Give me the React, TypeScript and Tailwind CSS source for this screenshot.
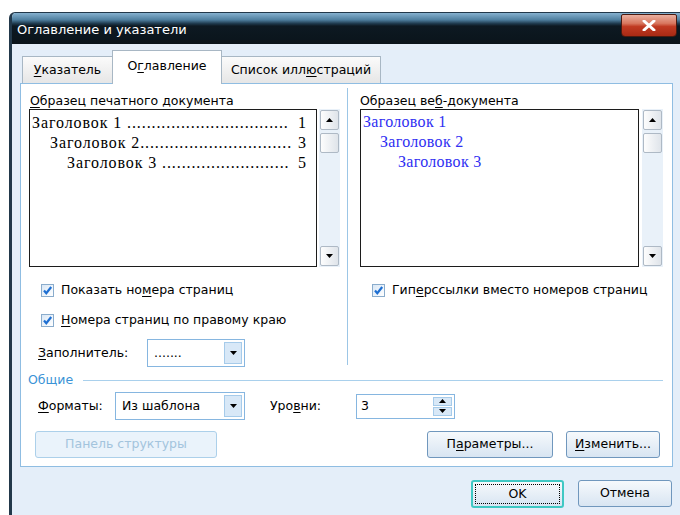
import React from "react";

// Accelerator letter, drawn underlined like a classic dialog
const U = ({ children }: { children: React.ReactNode }) => (
  <span className="underline underline-offset-[2px] decoration-1">{children}</span>
);

const Arrow = ({ dir }: { dir: "up" | "down" }) => (
  <svg width="7" height="4" viewBox="0 0 7 4">
    {dir === "up" ? <path d="M0 4 L3.5 0 L7 4 Z" fill="#000" /> : <path d="M0 0 L7 0 L3.5 4 Z" fill="#000" />}
  </svg>
);

const ScrollBtn = ({ dir }: { dir: "up" | "down" }) => (
  <div className="h-[20px] rounded-[2px] border border-[#aeb9c5] bg-gradient-to-r from-[#fdfdfd] to-[#dfe4ea] flex items-center justify-center">
    <Arrow dir={dir} />
  </div>
);

const ScrollBar = () => (
  <div className="w-[21px] h-[158px] bg-[#e9f1f9] flex flex-col justify-between py-px px-[1px]">
    <div>
      <ScrollBtn dir="up" />
      <div className="mt-[3px] h-[20px] rounded-[2px] border border-[#aeb9c5] bg-gradient-to-r from-[#fdfdfd] to-[#dfe4ea]" />
    </div>
    <ScrollBtn dir="down" />
  </div>
);

const CheckBox = () => (
  <span className="w-[13px] h-[13px] border border-[#8aaccc] bg-gradient-to-br from-[#d9e7f5] to-white flex items-center justify-center shrink-0">
    <svg width="11" height="11" viewBox="0 0 11 11">
      <path d="M2 5.5 L4.3 8.3 L9.2 2" stroke="#1e6fd2" strokeWidth="2.2" fill="none" />
    </svg>
  </span>
);

const Combo = ({ value, width }: { value: string; width: string }) => (
  <div className={`${width} h-[28px] border border-[#86b6e0] bg-white flex items-center justify-between p-[2px]`}>
    <span className="pl-[4px]">{value}</span>
    <span className="w-[18px] h-full border border-[#a6cbea] bg-[#d8e8f7] flex items-center justify-center">
      <Arrow dir="down" />
    </span>
  </div>
);

const Button = ({
  children,
  width,
  disabled,
}: {
  children: React.ReactNode;
  width: string;
  disabled?: boolean;
}) => (
  <div
    className={`${width} h-[27px] rounded-[3px] border flex items-center justify-center ${
      disabled
        ? "border-[#acd0ea] bg-[#eaf3fb] text-[#a3c4dd]"
        : "border-[#7097bd] bg-gradient-to-b from-[#f6f9fc] to-[#d8e5f2]"
    }`}
  >
    {children}
  </div>
);

// table of contents preview: heading, dot leader, page number
const printRows = [
  { text: "Заголовок 1 " + ".".repeat(33), page: "1", indent: "pl-0" },
  { text: "Заголовок 2" + ".".repeat(31), page: "3", indent: "pl-[18px]" },
  { text: "Заголовок 3 " + ".".repeat(26), page: "5", indent: "pl-[35px]" },
];

const webRows = [
  { text: "Заголовок 1", indent: "pl-0" },
  { text: "Заголовок 2", indent: "pl-[17px]" },
  { text: "Заголовок 3", indent: "pl-[35px]" },
];

export default function App() {
  return (
    <div className="w-[680px] h-[515px] bg-white overflow-hidden pt-[12px] pl-[9px] font-['DejaVu_Sans',sans-serif] text-[12.5px] text-black">
      <div className="w-[671px] h-[503px] flex flex-col rounded-tl-[6px] border-l-[3px] border-t border-[#22384a] overflow-hidden">
        {/* title bar */}
        <div className="h-[31px] shrink-0 flex items-start justify-between pr-[3px] bg-[linear-gradient(to_bottom,#86b2d0_0%,#4f7f9f_22%,#1f3a4e_34%,#0d1922_42%,#0a141b_100%)]">
          <span className="pl-[5px] pt-[9px] text-white text-[13px] leading-[16px]">Оглавление и указатели</span>
          <div className="mt-[1px] w-[56px] h-[23px] rounded-b-[4px] rounded-t-[2px] border border-[#4a1a10] bg-[linear-gradient(to_bottom,#eab0a0_0%,#d8765e_40%,#c03a22_55%,#a82a14_100%)] flex items-center justify-center">
            <svg width="14" height="11" viewBox="0 0 14 11">
              <path d="M2 1 L12 10 M12 1 L2 10" stroke="#fff" strokeWidth="3" strokeLinecap="round" />
            </svg>
          </div>
        </div>

        {/* dialog body */}
        <div className="flex-1 bg-[#e4eef9] pl-[8px] pr-[7px]">
          {/* tabs */}
          <div className="flex items-end h-[39px] pl-[2px]">
            <div className="w-[91px] h-[27px] border border-b-0 border-[#a8b7c4] bg-gradient-to-b from-[#fbfbfb] to-[#e6e6e6] flex items-center justify-center">
              <span><U>У</U>казатель</span>
            </div>
            <div className="relative z-10 -ml-px -mb-px w-[110px] h-[34px] border border-b-0 border-[#a8b7c4] bg-white flex items-center justify-center pb-[2px]">
              <span>О<U>г</U>лавление</span>
            </div>
            <div className="-ml-px w-[160px] h-[27px] border border-b-0 border-[#a8b7c4] bg-gradient-to-b from-[#fbfbfb] to-[#e6e6e6] flex items-center justify-center">
              <span>Список илл<U>ю</U>страций</span>
            </div>
          </div>

          {/* tab page */}
          <div className="w-[653px] h-[384px] border border-[#8fbde2] bg-white">
            <div className="mt-[4px] h-[277px] flex items-start">
              {/* printed preview */}
              <div className="w-[326px] pl-[8px] pt-[5px] flex flex-col">
                <div className="pl-[1px] leading-[16px]"><U>О</U>бразец печатного документа</div>
                <div className="flex gap-[2px]">
                  <div className="w-[288px] h-[158px] border border-[#1c1c1c] bg-white pt-[3px] pl-[2px] pr-[9px] font-['Liberation_Serif',serif] text-[16px] tracking-[0.9px] leading-[20px]">
                    {printRows.map((r) => (
                      <div key={r.page} className={`flex justify-between whitespace-pre ${r.indent}`}>
                        <span>{r.text}</span>
                        <span>{r.page}</span>
                      </div>
                    ))}
                  </div>
                  <ScrollBar />
                </div>
                <div className="mt-[15px] h-[16px] pl-[12px] flex items-center gap-[7px]">
                  <CheckBox />
                  <span>Показать но<U>м</U>ера страниц</span>
                </div>
                <div className="mt-[14px] h-[16px] pl-[12px] flex items-center gap-[7px]">
                  <CheckBox />
                  <span><U>Н</U>омера страниц по правому краю</span>
                </div>
                <div className="mt-[11px] pl-[9px] flex items-center">
                  <span className="w-[109px]"><U>З</U>аполнитель:</span>
                  <Combo value="......." width="w-[98px]" />
                </div>
              </div>

              <div className="w-px h-[277px] bg-[#9cc6e6]" />

              {/* web preview */}
              <div className="pl-[12px] pt-[5px] flex flex-col">
                <div className="leading-[16px]">Образец ве<U>б</U>-документа</div>
                <div className="flex gap-[3px]">
                  <div className="w-[279px] h-[158px] border border-[#1c1c1c] bg-white pt-[2px] pl-[2px] font-['Liberation_Serif',serif] text-[16px] tracking-[0.3px] leading-[20px] text-[#2f2ff2]">
                    {webRows.map((r) => (
                      <div key={r.text} className={r.indent}>{r.text}</div>
                    ))}
                  </div>
                  <ScrollBar />
                </div>
                <div className="mt-[15px] h-[16px] pl-[12px] flex items-center gap-[7px]">
                  <CheckBox />
                  <span>Гип<U>е</U>рссылки вместо номеров страниц</span>
                </div>
              </div>
            </div>

            {/* general group */}
            <div className="mt-[7px] h-[16px] pl-[7px] pr-[9px] flex items-center">
              <span className="text-[#3b93d6]">Общие</span>
              <div className="flex-1 ml-[10px] h-px bg-[#a9d0ec]" />
            </div>
            <div className="mt-[4px] h-[28px] pl-[17px] flex items-center">
              <span className="w-[77px]"><U>Ф</U>орматы:</span>
              <Combo value="Из шаблона" width="w-[130px]" />
              <span className="ml-[25px] w-[86px]">Уро<U>в</U>ни:</span>
              <div className="w-[99px] h-[25px] border border-[#86b6e0] bg-white flex items-center justify-between p-[2px]">
                <span className="pl-[2px]">3</span>
                <div className="w-[19px] h-full flex flex-col gap-px">
                  <span className="flex-1 border border-[#a6cbea] bg-[#d8e8f7] flex items-center justify-center">
                    <Arrow dir="up" />
                  </span>
                  <span className="flex-1 border border-[#a6cbea] bg-[#d8e8f7] flex items-center justify-center">
                    <Arrow dir="down" />
                  </span>
                </div>
              </div>
            </div>
            <div className="mt-[11px] pl-[14px] flex">
              <Button width="w-[182px]" disabled>Панель структуры</Button>
              <div className="ml-[210px]">
                <Button width="w-[126px]">П<U>а</U>раметры...</Button>
              </div>
              <div className="ml-[13px]">
                <Button width="w-[94px]"><U>И</U>зменить...</Button>
              </div>
            </div>
          </div>

          {/* dialog buttons */}
          <div className="mt-[13px] flex justify-end gap-[14px] pr-[1px]">
            <div className="w-[93px] h-[28px] rounded-[3px] border-2 border-[#3fc8c4] bg-gradient-to-b from-[#f6f9fc] to-[#d8e5f2] p-[2px]">
              <div className="w-full h-full border border-dotted border-black flex items-center justify-center">OK</div>
            </div>
            <div className="w-[94px] h-[28px]">
              <Button width="w-[94px]">Отмена</Button>
            </div>
          </div>
        </div>
      </div>
    </div>
  );
}
